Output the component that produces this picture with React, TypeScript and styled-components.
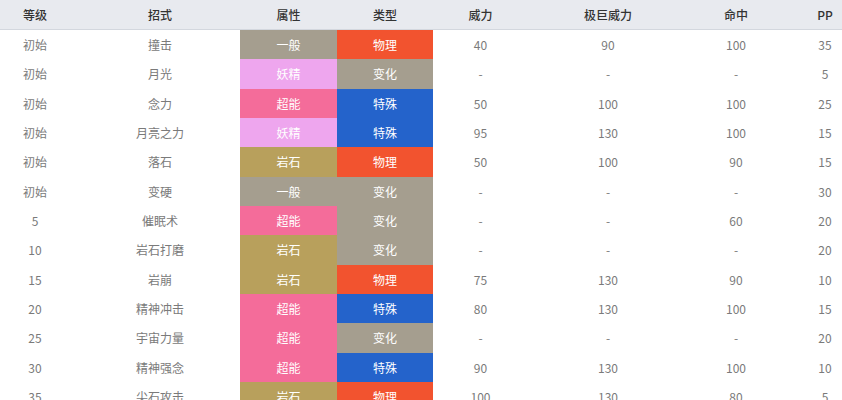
import styled, { createGlobalStyle } from 'styled-components';

type Move = {
  level: string;
  name: string;
  type: string;
  category: string;
  power: string;
  maxPower: string;
  accuracy: string;
  pp: string;
};

const typeColors: Record<string, string> = {
  一般: '#a59e8f',
  妖精: '#eea6ee',
  超能: '#f46c9a',
  岩石: '#b8a05c',
  物理: '#f2532f',
  变化: '#a59e8f',
  特殊: '#2463cb',
};

const moves: Move[] = [
  { level: '初始', name: '撞击', type: '一般', category: '物理', power: '40', maxPower: '90', accuracy: '100', pp: '35' },
  { level: '初始', name: '月光', type: '妖精', category: '变化', power: '-', maxPower: '-', accuracy: '-', pp: '5' },
  { level: '初始', name: '念力', type: '超能', category: '特殊', power: '50', maxPower: '100', accuracy: '100', pp: '25' },
  { level: '初始', name: '月亮之力', type: '妖精', category: '特殊', power: '95', maxPower: '130', accuracy: '100', pp: '15' },
  { level: '初始', name: '落石', type: '岩石', category: '物理', power: '50', maxPower: '100', accuracy: '90', pp: '15' },
  { level: '初始', name: '变硬', type: '一般', category: '变化', power: '-', maxPower: '-', accuracy: '-', pp: '30' },
  { level: '5', name: '催眠术', type: '超能', category: '变化', power: '-', maxPower: '-', accuracy: '60', pp: '20' },
  { level: '10', name: '岩石打磨', type: '岩石', category: '变化', power: '-', maxPower: '-', accuracy: '-', pp: '20' },
  { level: '15', name: '岩崩', type: '岩石', category: '物理', power: '75', maxPower: '130', accuracy: '90', pp: '10' },
  { level: '20', name: '精神冲击', type: '超能', category: '特殊', power: '80', maxPower: '130', accuracy: '100', pp: '15' },
  { level: '25', name: '宇宙力量', type: '超能', category: '变化', power: '-', maxPower: '-', accuracy: '-', pp: '20' },
  { level: '30', name: '精神强念', type: '超能', category: '特殊', power: '90', maxPower: '130', accuracy: '100', pp: '10' },
  { level: '35', name: '尖石攻击', type: '岩石', category: '物理', power: '100', maxPower: '130', accuracy: '80', pp: '5' },
];

const headers = ['等级', '招式', '属性', '类型', '威力', '极巨威力', '命中', 'PP'];

const GlobalStyle = createGlobalStyle`
  body {
    margin: 0;
    background: #fff;
    font-family: "Noto Sans CJK SC", "Noto Sans", sans-serif;
  }
`;

const App = () => (
  <>
    <GlobalStyle />
    <Table>
      <HeadRow>
        {headers.map((h) => (
          <HeadCell key={h}>{h}</HeadCell>
        ))}
      </HeadRow>
      {moves.map((m, i) => (
        <Row key={i}>
          <Cell>{m.level}</Cell>
          <Cell>{m.name}</Cell>
          <TypeCell $bg={typeColors[m.type]}>{m.type}</TypeCell>
          <TypeCell $bg={typeColors[m.category]}>{m.category}</TypeCell>
          <Cell>{m.power}</Cell>
          <Cell>{m.maxPower}</Cell>
          <Cell>{m.accuracy}</Cell>
          <Cell>{m.pp}</Cell>
        </Row>
      ))}
    </Table>
  </>
);

export default App;

const columns = '70px 170px 97px 96px 95px 160px 96px 58px';

const Table = styled.div`
  width: 842px;
  overflow: hidden;
`;

const RowBase = styled.div`
  display: grid;
  grid-template-columns: ${columns};

  & > :nth-child(2) {
    padding-left: 10px;
  }
  & > :nth-child(8) {
    padding-left: 24px;
  }
`;

const HeadRow = styled(RowBase)`
  height: 29px;
  background: #e8eaef;
  border-bottom: 1px solid #d3d7de;
`;

const Row = styled(RowBase)`
  height: 29.33px;
`;

const HeadCell = styled.div`
  display: flex;
  align-items: center;
  justify-content: center;
  font-size: 12px;
  font-weight: 500;
  color: #333;
`;

const Cell = styled.div`
  display: flex;
  align-items: center;
  justify-content: center;
  font-size: 12px;
  color: #7a7a7a;
`;

const TypeCell = styled(Cell)<{ $bg: string }>`
  background: ${(p) => p.$bg};
  color: #fff;
`;
